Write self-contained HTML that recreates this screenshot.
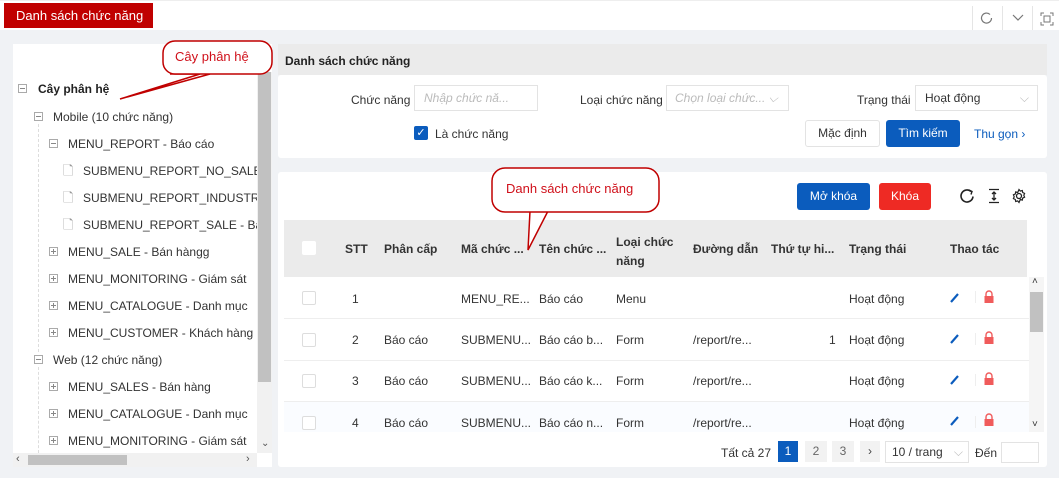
<!DOCTYPE html>
<html><head><meta charset="utf-8"><style>
*{box-sizing:border-box;margin:0;padding:0}
body{width:1059px;height:478px;background:#f0f2f5;font-family:"Liberation Sans",sans-serif;font-size:12px;color:#333;position:relative;overflow:hidden}
.a{position:absolute}
.t{position:absolute;white-space:nowrap}
.box{position:absolute;width:9px;height:9px;border:1px solid #aaa;background:#fff}
.box::after{content:"";position:absolute;left:1px;top:3px;width:5px;height:1px;background:#888}
.plus::before{content:"";position:absolute;left:3px;top:1px;width:1px;height:5px;background:#888}
.cb{position:absolute;width:14px;height:14px;border:1px solid #ddd;background:#fff;border-radius:2px}
.btn{position:absolute;border-radius:3px;text-align:center;line-height:28px;font-size:12px}
.sel{position:absolute;border:1px solid #e3e3e3;background:#fff;height:26px;line-height:24px;padding-left:9px;white-space:nowrap;overflow:hidden}
</style></head><body>
<div class="a" style="left:0;top:0;width:1059px;height:30px;background:#fff;border-top:1px solid #eee"></div>
<div class="a" style="left:4px;top:3px;width:149px;height:25px;background:#c00000;color:#fff;font-size:13px;line-height:25px;padding-left:12px">Danh sách chức năng</div>
<div class="a" style="left:972px;top:6px;width:1px;height:24px;background:#e5e5e5"></div>
<div class="a" style="left:1002px;top:6px;width:1px;height:24px;background:#e5e5e5"></div>
<div class="a" style="left:1032px;top:6px;width:1px;height:24px;background:#e5e5e5"></div>
<svg class="a" style="left:980px;top:11px" width="14" height="14"><path d="M10 3.5A5 5 0 1 0 11.5 7" fill="none" stroke="#777" stroke-width="1.2"/></svg>
<svg class="a" style="left:1012px;top:14px" width="12" height="8"><path d="M1 1l5 5 5-5" fill="none" stroke="#777" stroke-width="1.2"/></svg>
<svg class="a" style="left:1040px;top:12px" width="14" height="14"><path d="M1 4V1h3M10 1h3v3M13 10v3h-3M4 13H1v-3" fill="none" stroke="#777"/><rect x="4" y="4" width="6" height="6" fill="none" stroke="#777"/></svg>

<!-- left panel -->
<div class="a" style="left:13px;top:44px;width:259px;height:423px;background:#fff"></div>
<div class="a" style="left:0;top:0;width:257px;height:453px;overflow:hidden">
<div class="box" style="left:18px;top:84px"></div><div class="t" style="left:38px;top:82px;font-weight:bold;font-size:12px;color:#222">Cây phân hệ</div>
<div class="box" style="left:34px;top:112px"></div><div class="t" style="left:53px;top:110px">Mobile (10 chức năng)</div>
<div class="box" style="left:49px;top:139px"></div><div class="t" style="left:68px;top:137px">MENU_REPORT - Báo cáo</div>
<div class="t" style="left:63px;top:162px;color:#999;font-size:13px">🗋</div><div class="t" style="left:83px;top:164px">SUBMENU_REPORT_NO_SALE - Ba</div>
<div class="t" style="left:63px;top:189px;color:#999;font-size:13px">🗋</div><div class="t" style="left:83px;top:191px">SUBMENU_REPORT_INDUSTRY - B</div>
<div class="t" style="left:63px;top:216px;color:#999;font-size:13px">🗋</div><div class="t" style="left:83px;top:218px">SUBMENU_REPORT_SALE - Báo cá</div>
<div class="box plus" style="left:49px;top:247px"></div><div class="t" style="left:68px;top:245px">MENU_SALE - Bán hàngg</div>
<div class="box plus" style="left:49px;top:274px"></div><div class="t" style="left:68px;top:272px">MENU_MONITORING - Giám sát</div>
<div class="box plus" style="left:49px;top:301px"></div><div class="t" style="left:68px;top:299px">MENU_CATALOGUE - Danh mục</div>
<div class="box plus" style="left:49px;top:328px"></div><div class="t" style="left:68px;top:326px">MENU_CUSTOMER - Khách hàng</div>
<div class="box" style="left:34px;top:355px"></div><div class="t" style="left:53px;top:353px">Web (12 chức năng)</div>
<div class="box plus" style="left:49px;top:382px"></div><div class="t" style="left:68px;top:380px">MENU_SALES - Bán hàng</div>
<div class="box plus" style="left:49px;top:409px"></div><div class="t" style="left:68px;top:407px">MENU_CATALOGUE - Danh mục</div>
<div class="box plus" style="left:49px;top:436px"></div><div class="t" style="left:68px;top:434px">MENU_MONITORING - Giám sát</div>
<div class="a" style="left:38px;top:124px;width:1px;height:228px;border-left:1px dashed #ddd"></div>
<div class="a" style="left:38px;top:367px;width:1px;height:86px;border-left:1px dashed #ddd"></div>
</div>
<div class="a" style="left:257px;top:72px;width:15px;height:381px;background:#f1f1f1"></div>
<div class="a" style="left:258px;top:72px;width:13px;height:310px;background:#c1c1c1"></div>
<div class="t" style="left:261px;top:438px;font-size:10px;color:#555">⌄</div>
<div class="a" style="left:13px;top:453px;width:244px;height:14px;background:#f1f1f1"></div>
<div class="a" style="left:28px;top:455px;width:99px;height:10px;background:#c1c1c1"></div>
<div class="t" style="left:16px;top:453px;font-size:11px;color:#555">‹</div>
<div class="t" style="left:246px;top:453px;font-size:11px;color:#555">›</div>

<!-- right -->
<div class="a" style="left:278px;top:44px;width:769px;height:31px;background:#ebebeb"></div>
<div class="t" style="left:285px;top:54px;font-weight:bold;font-size:12px;color:#222">Danh sách chức năng</div>
<div class="a" style="left:278px;top:75px;width:769px;height:83px;background:#fff;border-radius:3px"></div>
<div class="t" style="left:351px;top:93px">Chức năng</div>
<div class="sel" style="left:414px;top:85px;width:124px;color:#bbb;font-style:italic">Nhập chức nă...</div>
<div class="t" style="left:580px;top:93px">Loại chức năng</div>
<div class="sel" style="left:666px;top:85px;width:123px;color:#bbb;font-style:italic;padding-left:8px">Chọn loại chức... ⌵</div>
<div class="t" style="left:857px;top:93px">Trạng thái</div>
<div class="sel" style="left:915px;top:85px;width:123px;color:#333">Hoạt động<span style="position:absolute;right:8px;color:#bbb">⌵</span></div>
<div class="a" style="left:414px;top:126px;width:14px;height:14px;background:#0b5cbd;border-radius:2px;color:#fff;font-size:11px;line-height:14px;text-align:center">✓</div>
<div class="t" style="left:435px;top:127px">Là chức năng</div>
<div class="btn" style="left:805px;top:120px;width:75px;height:27px;border:1px solid #e3e3e3;background:#fff;line-height:25px">Mặc định</div>
<div class="btn" style="left:886px;top:120px;width:74px;height:27px;background:#0b5cbd;color:#fff;line-height:27px">Tìm kiếm</div>
<div class="t" style="left:974px;top:127px;color:#0b5cbd">Thu gọn ›</div>

<div class="a" style="left:278px;top:172px;width:769px;height:295px;background:#fff;border-radius:3px"></div>
<div class="btn" style="left:797px;top:183px;width:73px;height:27px;background:#0b5cbd;color:#fff;line-height:27px">Mở khóa</div>
<div class="btn" style="left:879px;top:183px;width:52px;height:27px;background:#ee2a24;color:#fff;line-height:27px">Khóa</div>
<svg class="a" style="left:959px;top:188px" width="16" height="16"><path d="M12 3.5A6 6 0 1 0 14 8.5" fill="none" stroke="#222" stroke-width="1.6"/><path d="M10 2l3 1.5-1 3" fill="none" stroke="#222" stroke-width="1.4"/></svg>
<svg class="a" style="left:987px;top:188px" width="14" height="16"><path d="M2 1.5h10M2 14.5h10M7 4v8M5 6l2-2 2 2M5 10l2 2 2-2" fill="none" stroke="#222" stroke-width="1.3"/></svg>
<svg class="a" style="left:1011px;top:188px" width="16" height="16"><circle cx="8" cy="8" r="2.5" fill="none" stroke="#222" stroke-width="1.3"/><path d="M8 1.5l1.3 1.6 2-.6.4 2 1.9.9-.8 1.9.8 1.9-1.9.9-.4 2-2-.6L8 14.5l-1.3-1.6-2 .6-.4-2-1.9-.9.8-1.9-.8-1.9 1.9-.9.4-2 2 .6z" fill="none" stroke="#222" stroke-width="1.2"/></svg>

<div class="a" style="left:284px;top:220px;width:743px;height:57px;background:#ebebeb"></div>
<div class="cb" style="left:302px;top:241px;border-color:#fff"></div>
<div class="t" style="left:345px;top:242px;font-weight:bold">STT</div>
<div class="t" style="left:384px;top:242px;font-weight:bold">Phân cấp</div>
<div class="t" style="left:461px;top:242px;font-weight:bold">Mã chức ...</div>
<div class="t" style="left:539px;top:242px;font-weight:bold">Tên chức ...</div>
<div class="t" style="left:616px;top:233px;font-weight:bold;line-height:19px">Loại chức<br>năng</div>
<div class="t" style="left:693px;top:242px;font-weight:bold">Đường dẫn</div>
<div class="t" style="left:771px;top:242px;font-weight:bold">Thứ tự hi...</div>
<div class="t" style="left:849px;top:242px;font-weight:bold">Trạng thái</div>
<div class="t" style="left:950px;top:242px;font-weight:bold">Thao tác</div>

<div class="a" style="left:1029px;top:277px;width:15px;height:155px;background:#f5f5f5"></div>
<div class="a" style="left:1030px;top:292px;width:13px;height:40px;background:#c1c1c1"></div>
<div class="t" style="left:1032px;top:276px;font-size:10px">˄</div>
<div class="t" style="left:1032px;top:419px;font-size:10px">˅</div>
<div class="a" style="left:284px;top:318px;width:745px;height:1px;background:#eee"></div>
<div class="a" style="left:284px;top:360px;width:745px;height:1px;background:#eee"></div>
<div class="a" style="left:284px;top:401px;width:745px;height:1px;background:#eee"></div>
<div class="a" style="left:284px;top:402px;width:745px;height:30px;background:#fafcff"></div>

<div class="cb" style="left:302px;top:291px"></div><div class="t" style="left:352px;top:292px">1</div><div class="t" style="left:461px;top:292px">MENU_RE...</div><div class="t" style="left:539px;top:292px">Báo cáo</div><div class="t" style="left:616px;top:292px">Menu</div><div class="t" style="left:849px;top:292px">Hoạt động</div>
<div class="cb" style="left:302px;top:333px"></div><div class="t" style="left:352px;top:333px">2</div><div class="t" style="left:384px;top:333px">Báo cáo</div><div class="t" style="left:461px;top:333px">SUBMENU...</div><div class="t" style="left:539px;top:333px">Báo cáo b...</div><div class="t" style="left:616px;top:333px">Form</div><div class="t" style="left:693px;top:333px">/report/re...</div><div class="t" style="left:829px;top:333px">1</div><div class="t" style="left:849px;top:333px">Hoạt động</div>
<div class="cb" style="left:302px;top:374px"></div><div class="t" style="left:352px;top:374px">3</div><div class="t" style="left:384px;top:374px">Báo cáo</div><div class="t" style="left:461px;top:374px">SUBMENU...</div><div class="t" style="left:539px;top:374px">Báo cáo k...</div><div class="t" style="left:616px;top:374px">Form</div><div class="t" style="left:693px;top:374px">/report/re...</div><div class="t" style="left:849px;top:374px">Hoạt động</div>
<div class="cb" style="left:302px;top:416px"></div><div class="t" style="left:352px;top:416px">4</div><div class="t" style="left:384px;top:416px">Báo cáo</div><div class="t" style="left:461px;top:416px">SUBMENU...</div><div class="t" style="left:539px;top:416px">Báo cáo n...</div><div class="t" style="left:616px;top:416px">Form</div><div class="t" style="left:693px;top:416px">/report/re...</div><div class="t" style="left:849px;top:416px">Hoạt động</div>

<svg class="a" style="left:948px;top:291px" width="14" height="140">
<path d="M3 11L10 3" stroke="#0b5cbd" stroke-width="2.2"/>
<path d="M3 52L10 44" stroke="#0b5cbd" stroke-width="2.2"/><path d="M3 93L10 85" stroke="#0b5cbd" stroke-width="2.2"/><path d="M3 134L10 126" stroke="#0b5cbd" stroke-width="2.2"/></svg>
<div class="a" style="left:975px;top:291px;width:1px;height:12px;background:#eee"></div>
<div class="a" style="left:975px;top:333px;width:1px;height:12px;background:#eee"></div>
<div class="a" style="left:975px;top:374px;width:1px;height:12px;background:#eee"></div>
<div class="a" style="left:975px;top:416px;width:1px;height:12px;background:#eee"></div>
<svg class="a" style="left:982px;top:290px" width="14" height="142">
<g fill="#f05b5b" stroke="#f05b5b"><path d="M4 6V4a3 3 0 0 1 6 0v2" fill="none" stroke-width="1.4"/><rect x="2.5" y="6" width="9" height="7" stroke="none"/>
<path d="M4 47V45a3 3 0 0 1 6 0v2" fill="none" stroke-width="1.4"/><rect x="2.5" y="47" width="9" height="7" stroke="none"/>
<path d="M4 88V86a3 3 0 0 1 6 0v2" fill="none" stroke-width="1.4"/><rect x="2.5" y="88" width="9" height="7" stroke="none"/>
<path d="M4 129V127a3 3 0 0 1 6 0v2" fill="none" stroke-width="1.4"/><rect x="2.5" y="129" width="9" height="7" stroke="none"/></g></svg>

<div class="t" style="left:721px;top:446px">Tất cả 27</div>
<div class="a" style="left:778px;top:441px;width:20px;height:21px;background:#0b5cbd;color:#fff;text-align:center;line-height:21px">1</div>
<div class="a" style="left:805px;top:441px;width:22px;height:21px;background:#f2f2f2;color:#666;text-align:center;line-height:21px">2</div>
<div class="a" style="left:832px;top:441px;width:22px;height:21px;background:#f2f2f2;color:#666;text-align:center;line-height:21px">3</div>
<div class="a" style="left:860px;top:441px;width:20px;height:21px;background:#f2f2f2;color:#444;text-align:center;line-height:20px">›</div>
<div class="sel" style="left:885px;top:441px;width:84px;height:22px;line-height:20px;padding-left:6px">10 / trang<span style="position:absolute;right:5px;color:#bbb">⌵</span></div>
<div class="t" style="left:975px;top:446px">Đến</div>
<div class="a" style="left:1001px;top:442px;width:38px;height:21px;border:1px solid #e3e3e3;background:#fff"></div>

<!-- callouts -->
<svg class="a" style="left:0;top:0" width="1059" height="478">
<path d="M170 74 L200 74 L120 99 L210 74" fill="#fff" stroke="#c00000" stroke-width="1.5"/>
<rect x="163" y="41" width="109" height="33" rx="12" fill="#fff" stroke="#c00000" stroke-width="1.5"/>
<path d="M530 211 L528 250 L548 211" fill="#fff" stroke="#c00000" stroke-width="1.5"/>
<rect x="492" y="168" width="167" height="44" rx="13" fill="#fff" stroke="#c00000" stroke-width="1.5"/>
<path d="M531 209 L546 209" stroke="#fff" stroke-width="3"/>
</svg>
<div class="t" style="left:175px;top:49px;color:#d0101a;font-size:13px">Cây phân hệ</div>
<div class="t" style="left:506px;top:181px;color:#d0101a;font-size:13px">Danh sách chức năng</div>
</body></html>
